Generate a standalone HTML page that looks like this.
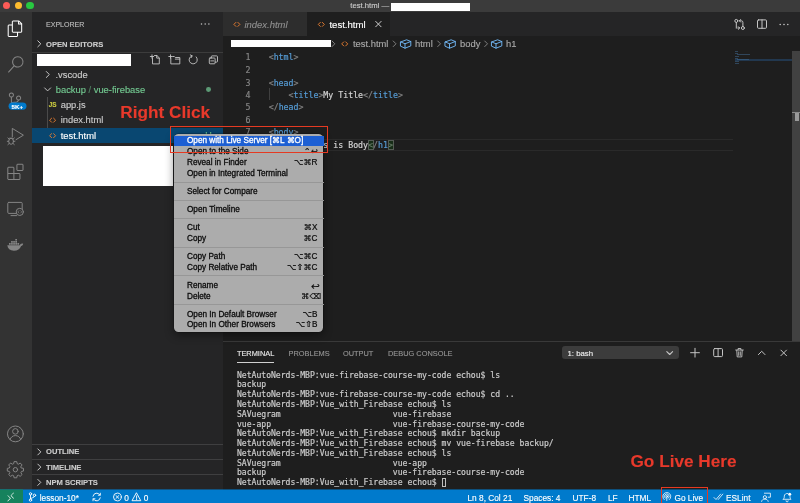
<!DOCTYPE html>
<html lang="en">
<head>
<meta charset="utf-8">
<title>test.html</title>
<style>
*{box-sizing:border-box;margin:0;padding:0}
html,body{width:800px;height:503px;overflow:hidden;background:#1e1e1e}
body{position:relative;font-family:"Liberation Sans",sans-serif;font-size:9px;color:#ccc;-webkit-font-smoothing:antialiased}
.a{position:absolute}
.t{position:absolute;white-space:nowrap;line-height:1;transform:translateY(-50%);-webkit-text-stroke:.13px}
.m{font-family:"DejaVu Sans Mono","Liberation Mono",monospace;-webkit-text-stroke:.18px}
svg{position:absolute;overflow:visible}
#titlebar{left:0;top:0;width:800px;height:12px;background:#3b3b3b}
#activity{left:0;top:12px;width:32px;height:478px;background:#333}
#sidebar{left:32px;top:12px;width:191px;height:478px;background:#252526}
#tabs{left:223px;top:12px;width:577px;height:24px;background:#252526}
#status{left:0;top:489px;width:800px;height:14px;background:linear-gradient(rgba(0,122,204,.55) 0,rgba(0,122,204,.55) 1px,#007acc 1px)}
.st{color:#fff;font-size:8.3px;top:497.5px}
.sb{font-weight:bold;font-size:8.1px;color:#ccc;transform:translateY(-50%) scaleX(.938);transform-origin:0 50%}
.tr{font-size:9.35px;color:#ccc}
.ln{color:#858585;font-size:8.25px;text-align:right;width:20px;left:230.5px}
.c{font-size:8.25px;color:#d4d4d4;left:268.7px;white-space:pre}
.c i{font-style:normal;color:#808080}
.c b{font-weight:normal;color:#569cd6}
.bc{font-size:9.4px;color:#a9a9a9;top:43.8px}
.pt{font-size:7.4px;color:#939393;top:353.9px}
.tm{font-size:8.1px;color:#ccc;left:236.9px;white-space:pre}
.mi{font-size:8.2px;color:#0c0c0c;-webkit-text-stroke:.3px #0c0c0c;left:187px}
.mk{font-size:8.2px;color:#0c0c0c;-webkit-text-stroke:.2px #0c0c0c;right:482.5px;font-family:"Liberation Sans","DejaVu Sans",sans-serif}
.sep{position:absolute;left:174.2px;width:149.5px;height:1px;background:#979797}
.red{color:#e8392b;font-weight:bold;font-size:17.2px}
</style>
</head>
<body>
<div id="root" style="position:absolute;left:0;top:0;width:800px;height:503px;will-change:transform">

<!-- title bar -->
<div class="a" id="titlebar"></div>
<div class="a" style="left:3.3px;top:2.2px;width:7.2px;height:7.2px;border-radius:50%;background:#fc5b57"></div>
<div class="a" style="left:14.9px;top:2.2px;width:7.2px;height:7.2px;border-radius:50%;background:#fdbc2e"></div>
<div class="a" style="left:26.4px;top:2.2px;width:7.2px;height:7.2px;border-radius:50%;background:#28c840"></div>
<div class="t" style="left:350.3px;top:6px;font-size:7.7px;color:#ccc">test.html —</div>
<div class="a" style="left:391px;top:3.2px;width:79px;height:7.6px;background:#fff"></div>

<!-- activity bar -->
<div class="a" id="activity"></div>


<!-- sidebar -->
<div class="a" id="sidebar"></div>
<div class="t" style="left:45.6px;top:25.2px;font-size:7.7px;color:#bbb;transform:translateY(-50%) scaleX(.916);transform-origin:0 50%">EXPLORER</div>
<div class="t sb" style="left:45.7px;top:44.9px">OPEN EDITORS</div>
<div class="a" style="left:32px;top:52px;width:191px;height:1px;background:#3c3c3c"></div>
<div class="a" style="left:36.8px;top:53.8px;width:94px;height:12.1px;background:#fff"></div>

<div class="t tr" style="left:55.5px;top:75.9px">.vscode</div>
<div class="t tr" style="left:55.8px;top:90.5px;color:#73c991">backup <span style="opacity:.6">/</span> vue-firebase</div>
<div class="a" style="left:205.8px;top:86.8px;width:4.8px;height:4.8px;border-radius:50%;background:#5c9a75"></div>
<div class="a" style="left:46.5px;top:97px;width:1px;height:46px;background:#4a4a4a"></div>
<div class="t" style="left:48.8px;top:105.3px;font-size:6.4px;color:#cbcb41;font-weight:bold">JS</div>
<div class="t tr" style="left:60.7px;top:106px">app.js</div>
<div class="t tr" style="left:60.7px;top:121px">index.html</div>
<div class="a" style="left:32px;top:128px;width:191px;height:15px;background:#094771"></div>
<div class="t tr" style="left:60.7px;top:136.6px;color:#fff">test.html</div>
<div class="t" style="left:205.3px;top:134.8px;font-size:9px;color:#73c991">U</div>
<div class="a" style="left:42.9px;top:145.5px;width:130.2px;height:40.7px;background:#fff"></div>

<div class="a" style="left:32px;top:444px;width:191px;height:1px;background:#3f3f40"></div>
<div class="a" style="left:32px;top:459px;width:191px;height:1px;background:#3f3f40"></div>
<div class="a" style="left:32px;top:474px;width:191px;height:1px;background:#3f3f40"></div>
<div class="t sb" style="left:45.7px;top:452.4px">OUTLINE</div>
<div class="t sb" style="left:45.7px;top:467.6px">TIMELINE</div>
<div class="t sb" style="left:45.7px;top:482.5px">NPM SCRIPTS</div>

<!-- editor tabs -->
<div class="a" id="tabs"></div>
<div class="a" style="left:223px;top:12px;width:84px;height:24px;background:#2d2d2d"></div>
<div class="a" style="left:307px;top:12px;width:83px;height:24px;background:#1e1e1e"></div>
<div class="t" style="left:244.5px;top:24.8px;font-size:9.45px;color:#8f8f8f;font-style:italic">index.html</div>
<div class="t" style="left:329.4px;top:24.8px;font-size:9.6px;color:#fff">test.html</div>

<!-- breadcrumbs -->
<div class="a" style="left:231.2px;top:39.9px;width:100px;height:7.2px;background:#fff"></div>
<div class="t bc" style="left:353px">test.html</div>
<div class="t bc" style="left:415px">html</div>
<div class="t bc" style="left:460px">body</div>
<div class="t bc" style="left:506px">h1</div>

<!-- code -->
<div class="a" style="left:223px;top:139px;width:509.7px;height:1px;background:#2a2a2a"></div>
<div class="a" style="left:223px;top:150px;width:509.7px;height:1px;background:#2a2a2a"></div>
<div class="a" style="left:269px;top:88px;width:1px;height:12.4px;background:#404040"></div>
<div class="a" style="left:269px;top:137.6px;width:1px;height:12.4px;background:#404040"></div>
<div class="t m ln" style="top:57.3px">1</div>
<div class="t m ln" style="top:69.67px">2</div>
<div class="t m ln" style="top:83px">3</div>
<div class="t m ln" style="top:95px">4</div>
<div class="t m ln" style="top:106.78px">5</div>
<div class="t m ln" style="top:120px">6</div>
<div class="t m ln" style="top:131.52px">7</div>
<div class="t m ln" style="top:145px;color:#c6c6c6">8</div>
<div class="t m c" style="top:57.3px"><i>&lt;</i><b>html</b><i>&gt;</i></div>
<div class="t m c" style="top:83px"><i>&lt;</i><b>head</b><i>&gt;</i></div>
<div class="t m c" style="top:95px">    <i>&lt;</i><b>title</b><i>&gt;</i>My Title<i>&lt;/</i><b>title</b><i>&gt;</i></div>
<div class="t m c" style="top:106.78px"><i>&lt;/</i><b>head</b><i>&gt;</i></div>
<div class="t m c" style="top:131.52px"><i>&lt;</i><b>body</b><i>&gt;</i></div>
<div class="t m c" style="top:145px">    <i>&lt;</i><b>h1</b><i>&gt;</i>This is Body<i>&lt;/</i><b>h1</b><i>&gt;</i></div>
<div class="a" style="left:368.1px;top:139.5px;width:5.5px;height:10.5px;border:1px solid #555c55;background:rgba(0,100,0,.22)"></div>
<div class="a" style="left:388px;top:139.5px;width:5.5px;height:10.5px;border:1px solid #555c55;background:rgba(0,100,0,.22)"></div>

<!-- minimap + scrollbar -->
<div class="a" style="left:735px;top:58.8px;width:57px;height:2.2px;background:#22384f"></div>
<div class="a" style="left:735.1px;top:50.80px;width:3.4px;height:1px;background:#4b7fb0;opacity:.42"></div>
<div class="a" style="left:735.1px;top:53.26px;width:3.4px;height:1px;background:#4b7fb0;opacity:.42"></div>
<div class="a" style="left:737.3px;top:54.49px;width:12.9px;height:1px;background:#4b7fb0;opacity:.42"></div>
<div class="a" style="left:735.1px;top:55.72px;width:3.9px;height:1px;background:#4b7fb0;opacity:.42"></div>
<div class="a" style="left:735.1px;top:58.18px;width:3.4px;height:1px;background:#4b7fb0;opacity:.42"></div>
<div class="a" style="left:737.3px;top:59.41px;width:11.8px;height:1px;background:#4b7fb0;opacity:.42"></div>
<div class="a" style="left:735.1px;top:60.64px;width:3.9px;height:1px;background:#4b7fb0;opacity:.42"></div>
<div class="a" style="left:735.1px;top:63.10px;width:3.9px;height:1px;background:#4b7fb0;opacity:.42"></div>
<div class="a" style="left:791.6px;top:51px;width:8.4px;height:290px;background:#414141"></div>
<div class="a" style="left:791.6px;top:111.8px;width:8.4px;height:1.6px;background:#8a8a8a"></div>
<div class="a" style="left:794.5px;top:113px;width:4px;height:8px;background:#9a9a9a"></div>

<!-- panel -->
<div class="a" style="left:223px;top:341px;width:577px;height:1px;background:#393939"></div>
<div class="t pt" style="left:236.9px;color:#e7e7e7">TERMINAL</div>
<div class="a" style="left:236.9px;top:362px;width:37.5px;height:1px;background:#d0d0d0"></div>
<div class="t pt" style="left:288.6px">PROBLEMS</div>
<div class="t pt" style="left:343px">OUTPUT</div>
<div class="t pt" style="left:388px">DEBUG CONSOLE</div>
<div class="a" style="left:561.5px;top:346px;width:117.5px;height:13.4px;background:#3c3c3c;border-radius:3px"></div>
<div class="t" style="left:567.5px;top:353.8px;font-size:7.8px;color:#f0f0f0">1: bash</div>

<div class="t m tm" style="top:374.6px">NetAutoNerds-MBP:vue-firebase-course-my-code echou$ ls</div>
<div class="t m tm" style="top:384.4px">backup</div>
<div class="t m tm" style="top:394.2px">NetAutoNerds-MBP:vue-firebase-course-my-code echou$ cd ..</div>
<div class="t m tm" style="top:404px">NetAutoNerds-MBP:Vue_with_Firebase echou$ ls</div>
<div class="t m tm" style="top:413.7px">SAVuegram                       vue-firebase</div>
<div class="t m tm" style="top:423.5px">vue-app                         vue-firebase-course-my-code</div>
<div class="t m tm" style="top:433.3px">NetAutoNerds-MBP:Vue_with_Firebase echou$ mkdir backup</div>
<div class="t m tm" style="top:443.1px">NetAutoNerds-MBP:Vue_with_Firebase echou$ mv vue-firebase backup/</div>
<div class="t m tm" style="top:452.9px">NetAutoNerds-MBP:Vue_with_Firebase echou$ ls</div>
<div class="t m tm" style="top:462.6px">SAVuegram                       vue-app</div>
<div class="t m tm" style="top:472.4px">backup                          vue-firebase-course-my-code</div>
<div class="t m tm" style="top:482.2px">NetAutoNerds-MBP:Vue_with_Firebase echou$ </div>
<div class="a" style="left:441.5px;top:477.5px;width:4.6px;height:9.4px;border:1px solid #bdbdbd"></div>

<!-- status bar -->
<div class="a" id="status"></div>
<div class="a" style="left:0;top:489px;width:22.5px;height:14px;background:linear-gradient(rgba(22,130,93,.55) 0,rgba(22,130,93,.55) 1px,#16825d 1px)"></div>
<div class="t st" style="left:39.7px">lesson-10*</div>
<div class="t st" style="left:124.3px">0</div>
<div class="t st" style="left:143.8px">0</div>
<div class="t st" style="left:467.5px">Ln 8, Col 21</div>
<div class="t st" style="left:523.5px">Spaces: 4</div>
<div class="t st" style="left:572.5px">UTF-8</div>
<div class="t st" style="left:608px">LF</div>
<div class="t st" style="left:628.5px">HTML</div>
<div class="t st" style="left:674.5px">Go Live</div>
<div class="t st" style="left:726px">ESLint</div>


<!-- icons -->
<svg class="a" style="left:0;top:0" width="800" height="503" viewBox="0 0 800 503" fill="none" stroke-linecap="round" stroke-linejoin="round">
<!-- activity bar -->
<g transform="translate(7,20.4) scale(.69)" fill="#fff"><path d="M17.5 0h-9L7 1.5V6H2.5L1 7.5v15.07L2.5 24h12.07L16 22.57V18h4.7l1.3-1.43V4.5L17.5 0zm0 2.12l2.38 2.38H17.5V2.12zm-3 20.38h-12v-15H7v9.07L8.5 18h6v4.5zm6-6h-12v-15H16V6h4.5v10.5z"/></g>
<g transform="translate(7.28,56.2) scale(.69)" fill="#858585"><path d="M15.25 0a8.25 8.25 0 0 0-6.18 13.72L1 22.88l1.12 1 8.05-9.12A8.251 8.251 0 1 0 15.25.01V0zm0 15a6.75 6.75 0 1 1 0-13.5 6.75 6.75 0 0 1 0 13.5z"/></g>
<g transform="translate(6.7,92.4) scale(.69)" fill="#858585"><path d="M21.007 8.222A3.738 3.738 0 0 0 15.045 5.2a3.737 3.737 0 0 0 1.156 6.583 2.988 2.988 0 0 1-2.668 1.67h-2.99a4.456 4.456 0 0 0-2.989 1.165V7.4a3.737 3.737 0 1 0-1.494 0v9.117a3.776 3.776 0 1 0 1.816.099 2.99 2.99 0 0 1 2.668-1.667h2.99a4.484 4.484 0 0 0 4.223-3.039 3.736 3.736 0 0 0 3.25-3.687zM4.565 3.738a2.242 2.242 0 1 1 4.484 0 2.242 2.242 0 0 1-4.484 0zm4.484 16.441a2.242 2.242 0 1 1-4.484 0 2.242 2.242 0 0 1 4.484 0zm8.221-9.715a2.242 2.242 0 1 1 0-4.485 2.242 2.242 0 0 1 0 4.485z"/></g>
<rect x="8.6" y="102.4" width="17.9" height="7.4" rx="3.7" fill="#007acc"/>
<g stroke="#858585" stroke-width="1">
<path d="M12.3,136.6V128.4L23.4,135.2L16,139.7"/>
<ellipse cx="11.1" cy="141.3" rx="2.4" ry="3"/>
<path d="M8.7,141.3h-1.400M13.500,141.300h1.400M9.200,139.200l-1.300,-1.200M13,139.200l1.300,-1.200M9.200,143.400l-1.300,1.200M13,143.400l1.300,1.200M9.600,138.200h3"/>
</g>
<g transform="translate(7.3,163.8) scale(.675)" fill="#858585"><path fill-rule="evenodd" d="M13.5 1.5L15 0h7.5L24 1.5V9l-1.5 1.5H15L13.5 9V1.5zm1.5 0V9h7.5V1.5H15zM0 15V6l1.5-1.5H9L10.5 6v7.5H18l1.5 1.5v7.5L18 24H1.5L0 22.5V15zm9-1.5V6H1.5v7.5H9zM9 15H1.5v7.5H9V15zm1.5 7.5H18V15h-7.5v7.5z"/></g>
<g stroke="#858585" stroke-width="1">
<rect x="7.8" y="202.4" width="14.4" height="11" rx="1"/>
<path d="M11,215.6h5.5"/>
<circle cx="19.8" cy="211.9" r="3.6" fill="#333"/>
<path d="M18.9,210.8l-1,1.1l1,1.1M20.7,210.8l1,1.1l-1,1.1" stroke-width=".7"/>
</g>
<g fill="#858585">
<path d="M7.3,245.3h12.6c.4-1.5 1.6-2.3 3.3-1.6c-.2 1.2-.9 2-2.1 2.2c-1 3.1-3.6 4.8-7.2 4.8c-4 0-6.2-1.8-6.6-5.4z"/>
<path d="M9,243.1h1.7v1.7H9zM11.1,243.1h1.7v1.7h-1.7zM13.2,243.1h1.7v1.7h-1.7zM15.3,243.1h1.7v1.7h-1.7zM17.4,243.1h1.7v1.7h-1.7zM11.1,241h1.7v1.7h-1.7zM13.2,241h1.7v1.7h-1.7zM15.3,241h1.7v1.7h-1.7zM15.3,238.9h1.7v1.7h-1.7z"/>
</g>
<g stroke="#858585" stroke-width="1">
<circle cx="15.4" cy="433.9" r="7.9"/>
<circle cx="15.4" cy="431.4" r="2.8"/>
<path d="M10,439.6c.8-2.6 2.8-4 5.4-4s4.600 1.400 5.400 4"/>
<path transform="translate(15.4,469.7)" d="M6.06,-1.71 L8.09,-1.35 L8.09,1.35 L6.06,1.71 L5.50,3.08 L6.67,4.77 L4.77,6.67 L3.08,5.50 L1.71,6.06 L1.35,8.09 L-1.35,8.09 L-1.71,6.06 L-3.08,5.50 L-4.77,6.67 L-6.67,4.77 L-5.50,3.08 L-6.06,1.71 L-8.09,1.35 L-8.09,-1.35 L-6.06,-1.71 L-5.50,-3.08 L-6.67,-4.77 L-4.77,-6.67 L-3.08,-5.50 L-1.71,-6.06 L-1.35,-8.09 L1.35,-8.09 L1.71,-6.06 L3.08,-5.50 L4.77,-6.67 L6.67,-4.77 L5.50,-3.08Z"/>
<circle cx="15.4" cy="469.7" r="2.2"/>
</g>
<!-- sidebar chevrons -->
<g stroke="#c5c5c5" stroke-width="1">
<path d="M37.8,40.8l3,3l-3,3"/>
<path d="M37.8,448.9l3,3l-3,3"/>
<path d="M37.8,464.1l3,3l-3,3"/>
<path d="M37.8,479.4l3,3l-3,3"/>
<path d="M46.3,71.5l3,3l-3,3"/>
<path d="M44.6,87.9l3,3l3,-3"/>
</g>
<!-- sidebar header icons -->
<g stroke="#c5c5c5" stroke-width=".9" transform="translate(0,.7)">
<path d="M152.5,57V63.2h6.800V57.2l-2.400-2.400H154.500M156.700,54.800v2.600h2.600M150.300,55.800h3.400M152,54.100v3.400"/>
<path d="M170.800,57.200V63.200h9V56.800h-4.500l-1-1h-1.500M175.300,58.400h4.500M168.800,55.800h3.400M170.500,54.100v3.400"/>
<path d="M196.200,56.200a4.100,4.100 0 1 1 -4.200,-1.100M190.300,54.200l1.900,1l-1.100,1.800"/>
<rect x="209.300" y="57.300" width="5.800" height="5.800" rx=".8"/>
<path d="M211.300,57.300v-1.300a.8.800 0 0 1 .8-.8h4.600a.8.800 0 0 1 .8.800v4.600a.8.800 0 0 1-.8.800h-1.500M210.800,60.200h2.800"/>
</g>
<!-- html file icons -->
<g stroke="#e07a30" stroke-width="1">
<path d="M51.6,118.2l-2,2l2,2M53.6,118.2l2,2l-2,2"/>
<path d="M51.6,133.7l-2,2l2,2M53.6,133.7l2,2l-2,2"/>
<path d="M235.9,22.4l-2,2l2,2M237.9,22.4l2,2l-2,2"/>
<path d="M320.3,22.4l-2,2l2,2M322.3,22.4l2,2l-2,2"/>
<path d="M343.7,41.9l-2,2l2,2M345.7,41.9l2,2l-2,2"/>
</g>
<!-- tab close, editor actions -->
<g stroke="#d0d0d0" stroke-width="1">
<path d="M375.7,21.4l5.4,5.4M381.1,21.4l-5.400,5.400"/>
</g>
<g stroke="#c5c5c5" stroke-width="1">
<circle cx="736.3" cy="20.900" r="1.500"/><circle cx="742.900" cy="28" r="1.500"/>
<path d="M736.300,22.400v5.800M742.900,26.500v-4.200a1.500,1.500 0 0 0-1.500-1.500h-1.800M740.600,19.500l-1.300,1.300l1.300,1.300M738.400,29.300l1.300-1.300l-1.300-1.300M739.500,28h-1.700"/>
<rect x="757.500" y="19.900" width="9" height="8.400" rx="1"/><path d="M762,19.900v8.400"/>
</g>
<g fill="#c5c5c5"><circle cx="780.200" cy="24.500" r=".8"/><circle cx="784" cy="24.500" r=".8"/><circle cx="787.800" cy="24.500" r=".8"/>
<circle cx="201.500" cy="23.900" r=".75"/><circle cx="205.200" cy="23.900" r=".75"/><circle cx="208.900" cy="23.900" r=".75"/></g>
<!-- breadcrumb chevrons + cubes -->
<g stroke="#8a8a8a" stroke-width=".9">
<path d="M332,41l2.800,2.800l-2.800,2.800M393.200,41l2.800,2.800l-2.800,2.800M437.700,41l2.800,2.800l-2.800,2.800M484.700,41l2.800,2.800l-2.800,2.800"/>
</g>
<g stroke="#75beff" stroke-width=".9">
<g id="cube"><path d="M400.800,41.900l5.800-2.100l4.200,1.700v4.400l-5.800,2.300l-4.200-1.900zM400.800,41.900l4.200,1.900l5.800-2.300M405,43.800v4.400"/></g>
<use href="#cube" x="44.500"/><use href="#cube" x="91"/>
</g>
<!-- panel actions -->
<g stroke="#c5c5c5" stroke-width="1">
<path d="M666.8,351.6l2.900,2.900l2.900,-2.900" stroke-width="1.100"/>
<path d="M690.600,352.700h8.800M695,348.300v8.800"/>
<rect x="713.700" y="348.600" width="8.800" height="8" rx="1"/><path d="M718.100,348.600v8"/>
<path d="M758.400,354.600l3.300-3.300l3.300,3.300"/>
<path d="M780.900,350.100l5.600,5.600M786.500,350.100l-5.600,5.600"/>
</g>
<g stroke="#c5c5c5" stroke-width=".9"><path d="M736.800,350.400l.4,6.500h4.600l.400-6.500M735.700,350h7.600M738.100,349.800v-1.300h2.800v1.300M738.700,351.800v3.600M740.300,351.800v3.600"/></g>
<!-- status bar icons -->
<g stroke="#fff" stroke-width=".9">
<path transform="translate(5.4,491.9) scale(.66)" fill="#fff" stroke="none" d="M12.904 9.57L8.928 5.596l3.976-3.976-.619-.62L8 5.286v.619l4.285 4.285.62-.618zM3 5.62l4.072 4.071L3 13.763l.619.618L8 10v-.619L3.619 5 3 5.619z"/>
<circle cx="30.500" cy="493.900" r="1.200"/><circle cx="30.500" cy="500.100" r="1.200"/><circle cx="34.500" cy="495.300" r="1.200"/>
<path d="M30.500,495.100v3.800M34.500,496.500c0,1.600-4,1-4,2.400"/>
<path d="M93,496.200a3.800,3.800 0 0 1 7-1.200M100.300,497.800a3.800,3.800 0 0 1-7,1.200M100.300,493.200v2h-2M93,500.800v-2h2"/>
<circle cx="117.400" cy="497" r="3.900"/><path d="M115.900,495.500l3,3M118.900,495.500l-3,3"/>
<path d="M136.600,493.100l4.200,7.600h-8.400zM136.600,495.800v2.600M136.600,499.300v.3"/>
<circle cx="666.8" cy="496.4" r=".9"/><path d="M666.8,497.500v3M665.200,498.200a2.400,2.400 0 1 1 3.200,0M664.200,499.600a4,4 0 1 1 5.200,0" stroke-width=".8"/>
<path d="M714,497.500l2,2l4.600-5.400M718.200,499.500l4.600-5.400" stroke-width=".8"/>
<path d="M764.400,493.200h6v4h-2.200M766.500,497.200a1.600,1.600 0 1 1-3.200,0a1.600,1.600 0 0 1 3.200,0M761.600,501.400c.3-1.600 1.600-2.300 3.300-2.300s3,.7 3.300,2.300" stroke-width=".8"/>
<path d="M783.300,499.300c1-1 1-2 1-3.200a2.700,2.700 0 0 1 3.400-2.600M790,496.600c0,1.200 .2,1.900 1,2.700h-7.700M786,500.800a1.100,1.100 0 0 0 2.200,0" stroke-width=".8"/>
</g>
<circle cx="789.700" cy="494.200" r="1.500" fill="#fff"/>
</svg>
<div class="t" style="left:11.6px;top:106.6px;font-size:6.2px;font-weight:bold;color:#fff">5K+</div>

<!-- context menu -->
<div class="a" id="menu" style="left:174.2px;top:133.5px;width:149px;height:198.6px;background:#acacac;border-radius:4.5px;box-shadow:0 3px 10px rgba(0,0,0,.45),0 0 0 .5px rgba(0,0,0,.35)"></div>
<div class="a" style="left:174.2px;top:136px;width:149.5px;height:9.7px;background:#1d5fd3"></div>
<div class="t mi" style="top:141.2px;color:#fff;-webkit-text-stroke-color:#fff">Open with Live Server [⌘L ⌘O]</div>
<div class="t mi" style="top:152.1px">Open to the Side</div>
<div class="t mk" style="top:152.1px">⌃↩</div>
<div class="t mi" style="top:163.1px">Reveal in Finder</div>
<div class="t mk" style="top:163.1px">⌥⌘R</div>
<div class="t mi" style="top:174.1px">Open in Integrated Terminal</div>
<div class="sep" style="top:181.6px"></div>
<div class="t mi" style="top:191.9px">Select for Compare</div>
<div class="sep" style="top:199.6px"></div>
<div class="t mi" style="top:210px">Open Timeline</div>
<div class="sep" style="top:217.6px"></div>
<div class="t mi" style="top:227.9px">Cut</div>
<div class="t mk" style="top:227.9px">⌘X</div>
<div class="t mi" style="top:238.9px">Copy</div>
<div class="t mk" style="top:238.9px">⌘C</div>
<div class="sep" style="top:246.6px"></div>
<div class="t mi" style="top:256.6px">Copy Path</div>
<div class="t mk" style="top:256.6px">⌥⌘C</div>
<div class="t mi" style="top:267.7px">Copy Relative Path</div>
<div class="t mk" style="top:267.7px">⌥⇧⌘C</div>
<div class="sep" style="top:275.2px"></div>
<div class="t mi" style="top:285.5px">Rename</div>
<div class="t mk" style="top:285.5px;right:480.2px;font-size:10.5px">↩</div>
<div class="t mi" style="top:296.5px">Delete</div>
<div class="t mk" style="top:296.5px;right:479px">⌘⌫</div>
<div class="sep" style="top:304.1px"></div>
<div class="t mi" style="top:314.5px">Open In Default Browser</div>
<div class="t mk" style="top:314.5px">⌥B</div>
<div class="t mi" style="top:325.3px">Open In Other Browsers</div>
<div class="t mk" style="top:325.3px">⌥⇧B</div>

<!-- annotations -->
<div class="t red" style="left:120.3px;top:113px">Right Click</div>
<div class="a" style="left:170px;top:126px;width:157.5px;height:26.5px;border:1px solid #e53a22"></div>
<div class="t red" style="left:630.5px;top:461.5px">Go Live Here</div>
<div class="a" style="left:660.6px;top:486.6px;width:47.6px;height:20px;border:1px solid #e53a22"></div>

</div>
</body>
</html>
